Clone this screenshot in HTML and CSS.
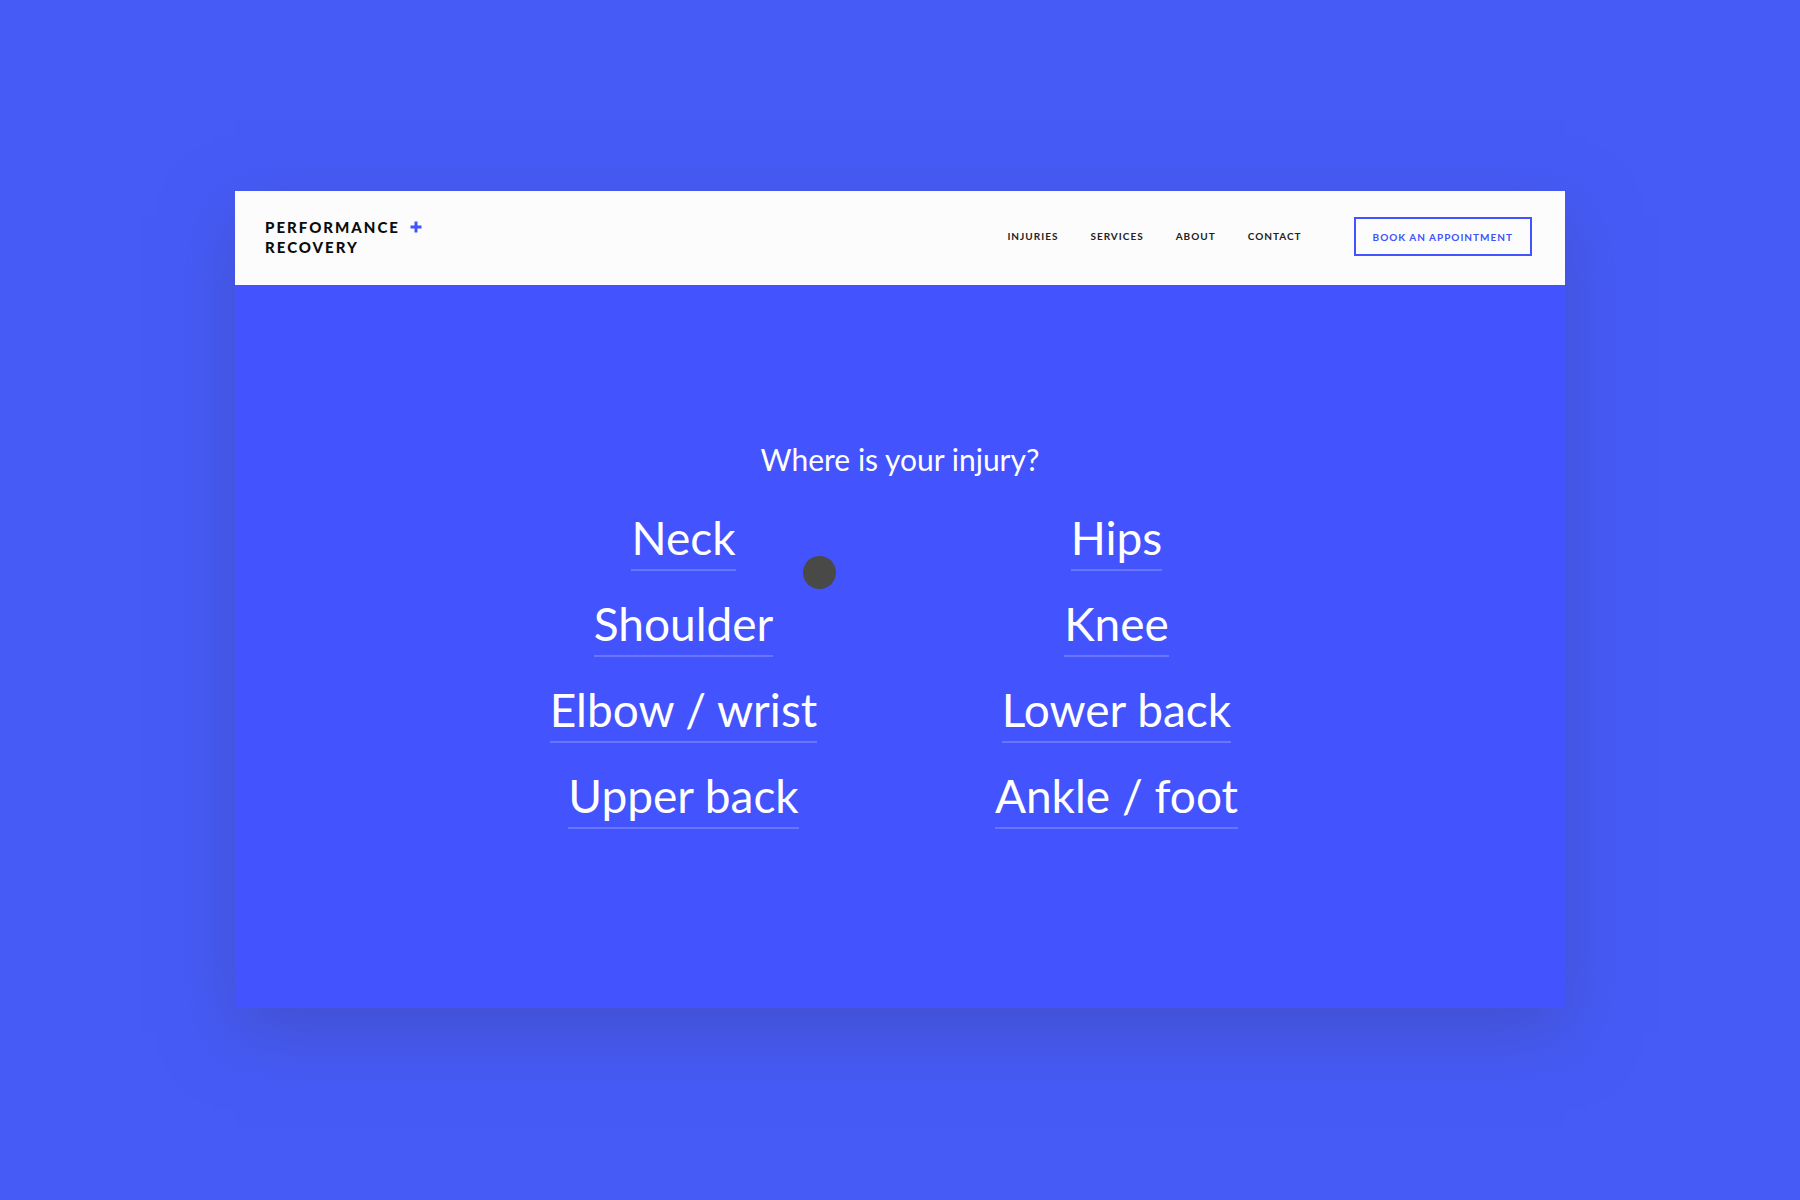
FILE: index.html
```html
<!DOCTYPE html>
<html lang="en">
<head>
  <meta charset="UTF-8">
  <meta name="viewport" content="width=device-width, initial-scale=1.0">
  <title>Performance + Recovery</title>
  <link rel="stylesheet" href="styles.css">
</head>
<body>
  <div class="window">
    <header class="header">
      <a href="#" class="logo">
        <span>PERFORMANCE
          <svg class="plus" viewBox="0 0 12 12" aria-hidden="true"><path d="M6 0.5v11M0.5 6h11"/></svg>
        </span>
        <span>RECOVERY</span>
      </a>
      <nav class="nav">
        <a href="#injuries">INJURIES</a>
        <a href="#services">SERVICES</a>
        <a href="#about">ABOUT</a>
        <a href="#contact">CONTACT</a>
      </nav>
      <button type="button" class="book">BOOK AN APPOINTMENT</button>
    </header>

    <main class="picker" id="injuries">
      <h1>Where is your injury?</h1>
      <div class="options">
        <a href="#neck">Neck</a>
        <a href="#hips">Hips</a>
        <a href="#shoulder">Shoulder</a>
        <a href="#knee">Knee</a>
        <a href="#elbow-wrist">Elbow / wrist</a>
        <a href="#lower-back">Lower back</a>
        <a href="#upper-back">Upper back</a>
        <a href="#ankle-foot">Ankle / foot</a>
      </div>
    </main>

    <div class="cursor"></div>
  </div>
</body>
</html>
```
FILE: styles.css
```css
* {
  box-sizing: border-box;
}

body {
  margin: 0;
  padding: 191px 235px;
  background: #465bf6;
  font-family: Lato, "Open Sans", sans-serif;
}

a {
  color: inherit;
  text-decoration: none;
}

.window {
  position: relative;
  background: #4353fd;
  box-shadow: 0 24px 64px rgba(62, 70, 170, 0.5);
}

/* Header */
.header {
  display: flex;
  align-items: flex-start;
  padding: 26px 33px 28px 30px;
  background: #fcfcfc;
}

.logo {
  display: flex;
  flex-direction: column;
  margin-right: auto;
  color: #0c0c0c;
  font-size: 15px;
  font-weight: 900;
  line-height: 20px;
  letter-spacing: 2px;
}

.plus {
  width: 12px;
  height: 12px;
  margin-left: 4px;
  stroke: #4353fd;
  stroke-width: 3;
  vertical-align: 0;
}

.nav,
.book {
  font-family: inherit;
  font-size: 10px;
  font-weight: 700;
  letter-spacing: 1px;
}

.nav {
  display: flex;
  gap: 32px;
  margin-right: 52px;
  color: #222;
  line-height: 39px;
}

.book {
  height: 39px;
  padding: 0 17px;
  border: 2px solid #4353fd;
  background: none;
  color: #4353fd;
  cursor: pointer;
}

/* Injury picker */
.picker {
  padding: 155px 0 179px;
  color: #fff;
  text-align: center;
}

h1 {
  margin: 0 0 29px;
  font-size: 30px;
  font-weight: 400;
  line-height: 38px;
}

.options {
  display: grid;
  grid-template-columns: 433px 433px;
  justify-content: center;
  justify-items: center;
  row-gap: 22px;
}

.options a {
  border-bottom: 2px solid rgba(255, 255, 255, 0.2);
  font-size: 46px;
  line-height: 62px;
}

.options a:hover {
  border-color: #fff;
}

/* Custom mouse cursor */
.cursor {
  position: absolute;
  top: 365px;
  left: 568px;
  width: 33px;
  height: 33px;
  border-radius: 50%;
  background: #494947;
  pointer-events: none;
}
```
